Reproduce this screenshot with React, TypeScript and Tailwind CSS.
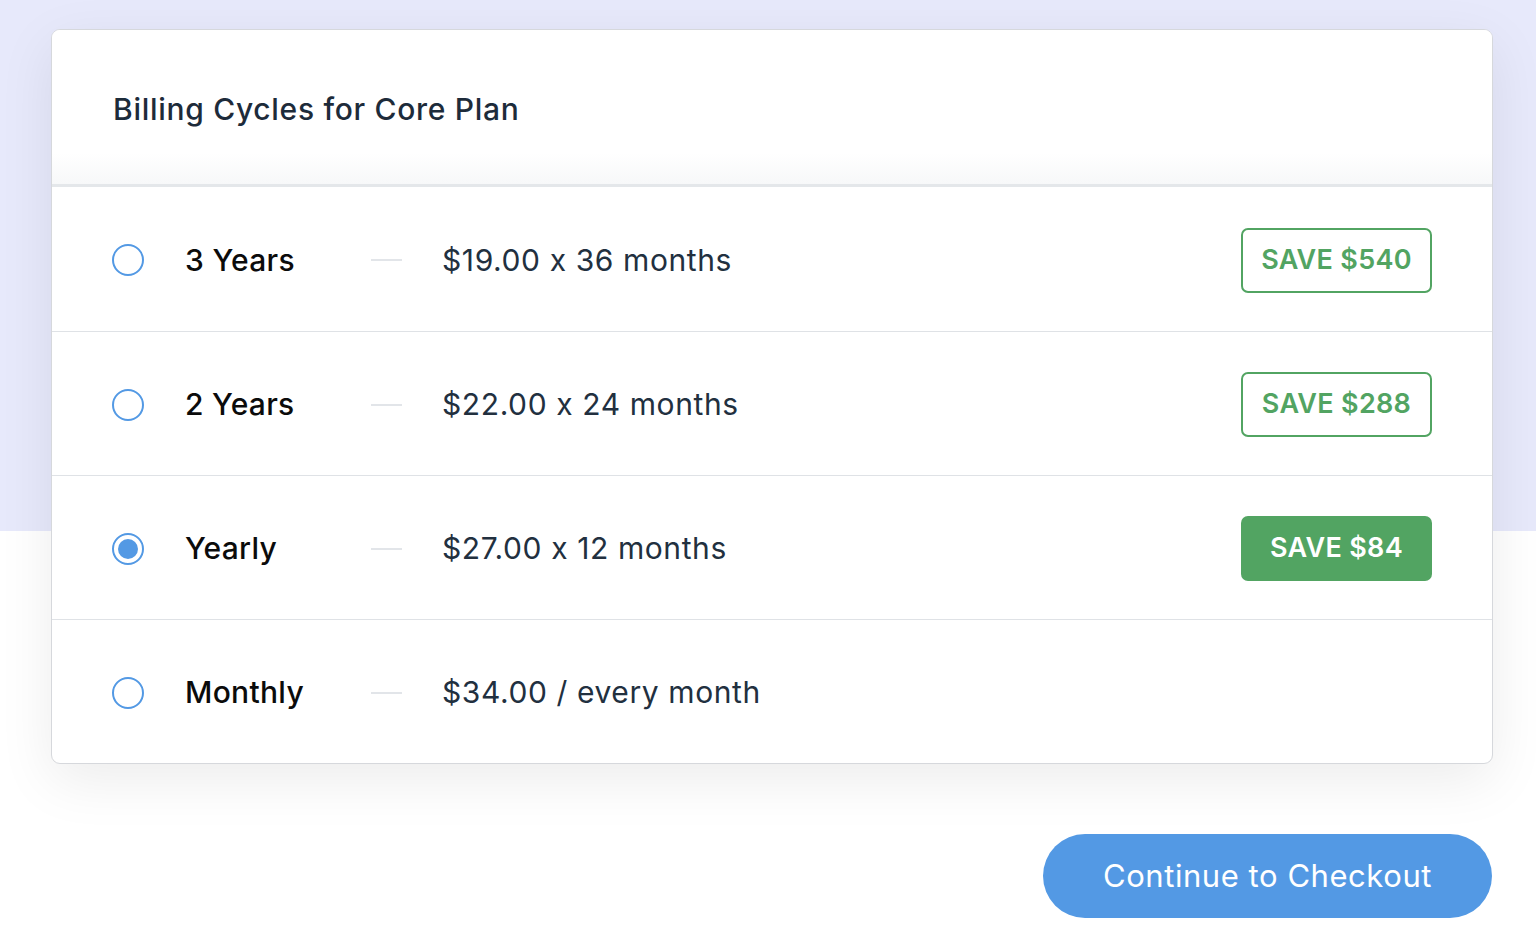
import React from "react";

type Row = { label: string; price: string; save?: string; selected?: boolean };

const rows: Row[] = [
  { label: "3 Years", price: "$19.00 x 36 months", save: "SAVE $540" },
  { label: "2 Years", price: "$22.00 x 24 months", save: "SAVE $288" },
  { label: "Yearly", price: "$27.00 x 12 months", save: "SAVE $84", selected: true },
  { label: "Monthly", price: "$34.00 / every month" },
];

function Radio({ selected }: { selected?: boolean }) {
  return (
    <div className="w-[32px] h-[32px] rounded-full border-2 border-[#5399e4] flex items-center justify-center shrink-0 bg-white">
      {selected && <div className="w-[20px] h-[20px] rounded-full bg-[#5399e4]" />}
    </div>
  );
}

export default function App() {
  return (
    <div
      className="relative w-[1536px] h-[948px] bg-white overflow-hidden"
      style={{ fontFamily: 'Inter, "Noto Sans", sans-serif' }}
    >
      <div className="absolute left-0 top-0 w-full h-[531px] bg-[#e7e9fb]" />
      <div className="relative flex flex-col pt-[29px] pl-[51px] w-[1493px]">
        <div className="w-[1442px] bg-white rounded-[9px] border border-[#d6d8dc] shadow-[0_16px_56px_rgba(0,0,0,0.08)] overflow-hidden">
          <div className="h-[154px] flex items-center pl-[61px] pt-[4px] bg-gradient-to-b from-white from-80% to-[#f7f8f9]">
            <span className="text-[30px] font-medium text-[#1d2b3a] tracking-[0.7px]">
              Billing Cycles for Core Plan
            </span>
          </div>
          <div className="h-[3px] bg-[#e4e7ea]" />
          {rows.map((r, i) => (
            <div
              key={r.label}
              className={`h-[144px] flex items-center pt-[2px] pl-[60px] pr-[60px] ${i > 0 ? "border-t border-[#dfe2e6]" : ""}`}
            >
              <Radio selected={r.selected} />
              <span className="ml-[41px] w-[186px] text-[30px] font-medium text-[#0b0b0b] tracking-[0.3px]">{r.label}</span>
              <div className="w-[31px] h-[2px] bg-[#e2e5e9]" />
              <span className="ml-[40px] text-[30px] text-[#22303f] flex-1 tracking-[0.6px]">{r.price}</span>
              {r.save &&
                (r.selected ? (
                  <div className="w-[191px] h-[65px] rounded-[7px] bg-[#52a462] flex items-center justify-center text-[27px] font-semibold text-white tracking-[0.3px]">
                    {r.save}
                  </div>
                ) : (
                  <div className="w-[191px] h-[65px] rounded-[7px] border-2 border-[#52a462] bg-white flex items-center justify-center text-[27px] font-semibold text-[#52a462] tracking-[0.3px]">
                    {r.save}
                  </div>
                ))}
            </div>
          ))}
        </div>
        <div className="flex justify-end mt-[70px] pr-[1px]">
          <button className="w-[449px] h-[84px] rounded-full bg-[#5399e4] text-white text-[31px] flex items-center justify-center tracking-[0.55px]">
            Continue to Checkout
          </button>
        </div>
      </div>
    </div>
  );
}
